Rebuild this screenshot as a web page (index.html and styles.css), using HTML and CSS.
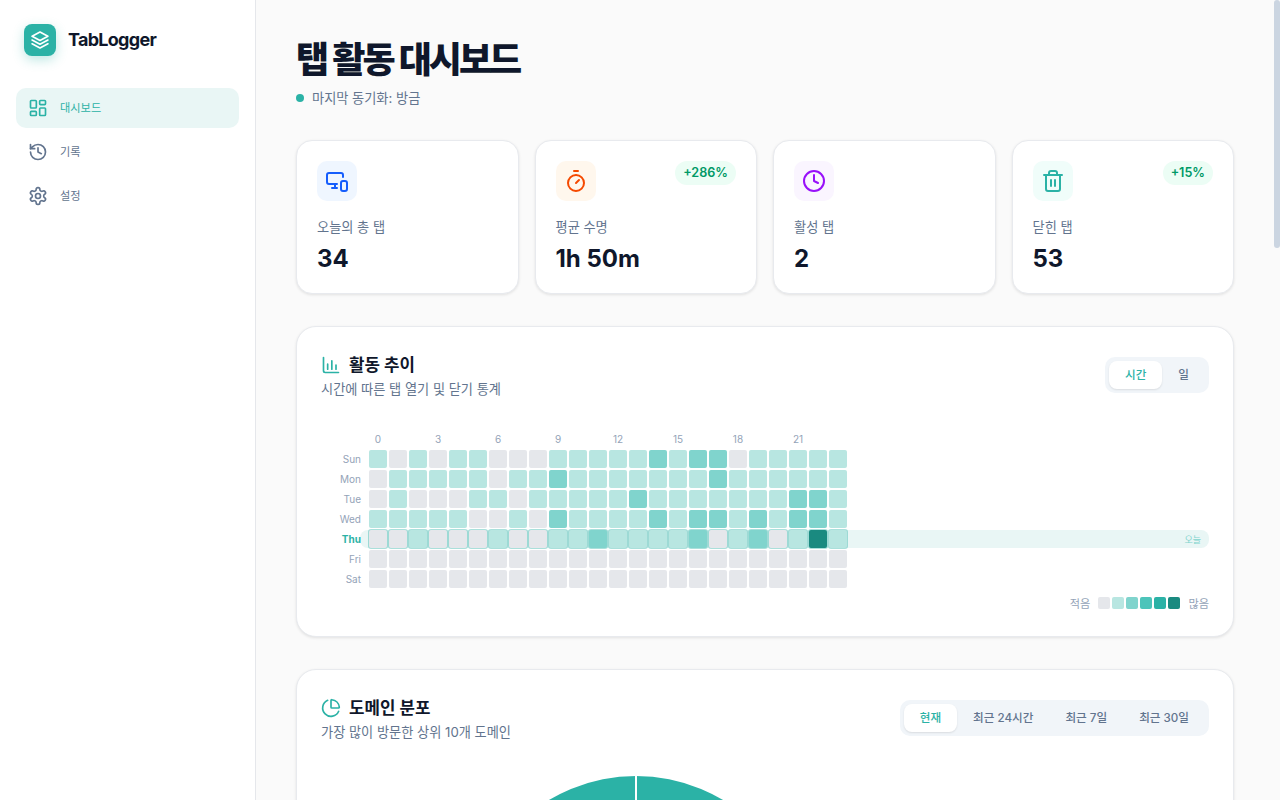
FILE: index.html
```html
<!DOCTYPE html>
<html lang="ko">
<head>
<meta charset="utf-8">
<title>TabLogger</title>
<link rel="stylesheet" href="styles.css">
</head>
<body>
<div class="app">
  <aside class="sidebar">
    <div class="brand">
      <div class="brand-logo">
        <svg viewBox="0 0 24 24" class="ic-20"><path d="M12 2.500 2.500 7.500 12 12.500l9.500-5z"/><path d="m2.500 12 9.500 5 9.500-5"/><path d="m2.500 16.500 9.500 5 9.500-5"/></svg>
      </div>
      <span class="brand-name">TabLogger</span>
    </div>
    <nav class="nav">
      <a class="nav-item active">
        <svg viewBox="0 0 24 24" class="ic-nav"><rect x="3" y="3" width="7" height="9" rx="1"/><rect x="14" y="3" width="7" height="5" rx="1"/><rect x="14" y="12" width="7" height="9" rx="1"/><rect x="3" y="16" width="7" height="5" rx="1"/></svg>
        <span>대시보드</span>
      </a>
      <a class="nav-item">
        <svg viewBox="0 0 24 24" class="ic-nav"><path d="M3 12a9 9 0 1 0 9-9 9.75 9.75 0 0 0-6.74 2.74L3 8"/><path d="M3 3v5h5"/><path d="M12 7v5l4 2"/></svg>
        <span>기록</span>
      </a>
      <a class="nav-item">
        <svg viewBox="0 0 24 24" class="ic-nav"><path d="M12.22 2h-.44a2 2 0 0 0-2 2v.18a2 2 0 0 1-1 1.730l-.43.25a2 2 0 0 1-2 0l-.15-.08a2 2 0 0 0-2.730.73l-.22.38a2 2 0 0 0 .73 2.730l.15.1a2 2 0 0 1 1 1.720v.51a2 2 0 0 1-1 1.740l-.15.09a2 2 0 0 0-.73 2.730l.22.38a2 2 0 0 0 2.730.73l.15-.08a2 2 0 0 1 2 0l.43.25a2 2 0 0 1 1 1.730V20a2 2 0 0 0 2 2h.44a2 2 0 0 0 2-2v-.18a2 2 0 0 1 1-1.730l.43-.25a2 2 0 0 1 2 0l.15.08a2 2 0 0 0 2.730-.73l.22-.39a2 2 0 0 0-.73-2.730l-.15-.08a2 2 0 0 1-1-1.740v-.5a2 2 0 0 1 1-1.740l.15-.09a2 2 0 0 0 .73-2.730l-.22-.38a2 2 0 0 0-2.730-.73l-.15.08a2 2 0 0 1-2 0l-.43-.25a2 2 0 0 1-1-1.730V4a2 2 0 0 0-2-2z"/><circle cx="12" cy="12" r="3"/></svg>
        <span>설정</span>
      </a>
    </nav>
  </aside>

  <main class="main">
    <header class="page-head">
      <h1 class="page-title">탭 활동 대시보드</h1>
      <div class="sync"><span class="sync-dot"></span><span class="sync-text">마지막 동기화: 방금</span></div>
    </header>

    <section class="stats">
      <article class="stat">
        <div class="stat-top">
          <div class="stat-icon tone-blue"><svg viewBox="0 0 24 24"><path d="M18 8V6a2 2 0 0 0-2-2H4a2 2 0 0 0-2 2v7a2 2 0 0 0 2 2h8"/><path d="M10 19v-3.960"/><path d="M7 19h5"/><rect x="16" y="12" width="6" height="10" rx="2"/></svg></div>
        </div>
        <div class="stat-label">오늘의 총 탭</div>
        <div class="stat-value">34</div>
      </article>
      <article class="stat">
        <div class="stat-top">
          <div class="stat-icon tone-orange"><svg viewBox="0 0 24 24"><path d="M10 2h4"/><path d="m12 14 3-3"/><circle cx="12" cy="14" r="8"/></svg></div>
          <span class="badge">+286%</span>
        </div>
        <div class="stat-label">평균 수명</div>
        <div class="stat-value">1h 50m</div>
      </article>
      <article class="stat">
        <div class="stat-top">
          <div class="stat-icon tone-purple"><svg viewBox="0 0 24 24"><circle cx="12" cy="12" r="10"/><path d="M12 6v6l4 2"/></svg></div>
        </div>
        <div class="stat-label">활성 탭</div>
        <div class="stat-value">2</div>
      </article>
      <article class="stat">
        <div class="stat-top">
          <div class="stat-icon tone-teal"><svg viewBox="0 0 24 24"><path d="M3 6h18"/><path d="M19 6v14c0 1-1 2-2 2H7c-1 0-2-1-2-2V6"/><path d="M8 6V4c0-1 1-2 2-2h4c1 0 2 1 2 2v2"/><path d="M10 11v6M14 11v6"/></svg></div>
          <span class="badge">+15%</span>
        </div>
        <div class="stat-label">닫힌 탭</div>
        <div class="stat-value">53</div>
      </article>
    </section>

    <section class="card">
      <div class="card-head">
        <div>
          <h2 class="card-title">
            <svg viewBox="0 0 24 24" class="ic-title"><path d="M3 3v16a2 2 0 0 0 2 2h16"/><path d="M8 17v-6M13 17V7M18 17v-5"/></svg>
            활동 추이
          </h2>
          <p class="card-sub">시간에 따른 탭 열기 및 닫기 통계</p>
        </div>
        <div class="seg">
          <button class="seg-btn on">시간</button>
          <button class="seg-btn">일</button>
        </div>
      </div>

      <div class="heatmap">
        <div class="hours" id="hours"></div>
        <div class="rows" id="rows"></div>
        <div class="legend">
          <span>적음</span>
          <div class="legend-cells">
            <i class="cell l0"></i><i class="cell l1"></i><i class="cell l2"></i><i class="cell l3"></i><i class="cell l4"></i><i class="cell l5"></i>
          </div>
          <span>많음</span>
        </div>
      </div>
    </section>

    <section class="card card-domain">
      <div class="card-head">
        <div>
          <h2 class="card-title">
            <svg viewBox="0 0 24 24" class="ic-title"><path d="M21 12c.55 0 1-.45.95-1A10 10 0 0 0 13 2.050c-.55-.05-1 .4-1 .95v8a1 1 0 0 0 1 1z"/><path d="M21.200 15.900A10 10 0 1 1 8 2.800"/></svg>
            도메인 분포
          </h2>
          <p class="card-sub">가장 많이 방문한 상위 10개 도메인</p>
        </div>
        <div class="seg">
          <button class="seg-btn on">현재</button>
          <button class="seg-btn">최근 24시간</button>
          <button class="seg-btn">최근 7일</button>
          <button class="seg-btn">최근 30일</button>
        </div>
      </div>
      <div class="pie-wrap">
        <svg class="pie" viewBox="0 0 340 340"><circle cx="170" cy="170" r="170"/><path d="M170 0v170"/></svg>
      </div>
    </section>
  </main>
  <div class="scroll-thumb"></div>
</div>
<script src="app.js"></script>
</body>
</html>
```

FILE: styles.css
```css
* { box-sizing: border-box; }
html, body { margin: 0; height: 100%; overflow: hidden; }
body {
  font-family: Inter, "Noto Sans CJK KR", sans-serif;
  color: #0f172b;
  background: #fafafa;
}
svg { fill: none; stroke: currentColor; stroke-width: 2; stroke-linecap: round; stroke-linejoin: round; flex: none; display: block; }
.ic-20 { width: 20px; height: 20px; }
.ic-nav { width: 20px; height: 20px; }
.ic-title { width: 20px; height: 20px; color: #2bb2a6; }

.app { display: flex; height: 100vh; position: relative; }
.scroll-thumb { position: absolute; top: 0; right: 0; width: 6px; height: 248px; border-radius: 3px; background: #cbd5e1; }

.sidebar {
  width: 256px; flex: none; background: #fff; border-right: 1px solid #e5e7eb;
  padding: 24px 16px;
}
.brand { display: flex; align-items: center; gap: 12px; padding: 0 8px; margin-bottom: 32px; height: 32px; }
.brand-logo {
  width: 32px; height: 32px; border-radius: 8px; background: #2bb2a6; color: #fff;
  display: flex; align-items: center; justify-content: center;
  box-shadow: 0 4px 12px rgba(43,178,166,.3);
}
.brand-name { font-size: 18px; line-height: 28px; margin-top: -1px; font-weight: 700; letter-spacing: -.04em; color: #0f172b; }
.nav { display: flex; flex-direction: column; gap: 4px; }
.nav-item {
  height: 40px; display: flex; align-items: center; gap: 12px; padding: 0 12px;
  border-radius: 10px; font-size: 11.2px; color: #62748e;
}
.nav-item span { margin-top: -2px; }
.nav-item svg { color: #62748e; }
.nav-item.active { background: #e9f6f5; color: #2bb2a6; }
.nav-item.active svg { color: #2bb2a6; }

.main { flex: 1; min-width: 0; height: 100vh; overflow: hidden; padding: 40px 46px 40px 40px; }

.page-head { margin-bottom: 32px; }
.page-title { margin: 0; font-size: 36px; line-height: 40px; font-weight: 900; letter-spacing: -3px; word-spacing: 2px; color: #0f172b; }
.sync { display: flex; align-items: center; gap: 8px; height: 20px; margin-top: 8px; font-size: 13.2px; line-height: 20px; color: #62748e; }
.sync-text { margin-top: 0; }
.sync-dot { width: 8px; height: 8px; border-radius: 50%; background: #2bb2a6; }

.stats { display: grid; grid-template-columns: repeat(4, 1fr); gap: 16px; margin-bottom: 32px; }
.stat {
  height: 154px; padding: 20px; background: #fff; border: 1px solid #e8eaee; border-radius: 16px;
  box-shadow: 0 1px 3px rgba(0,0,0,.1);
}
.stat-top { display: flex; justify-content: space-between; align-items: flex-start; margin-bottom: 16px; }
.stat-icon { width: 40px; height: 40px; border-radius: 10px; display: flex; align-items: center; justify-content: center; }
.stat-icon svg { width: 24px; height: 24px; }
.tone-blue { background: #eff6ff; color: #155dfc; }
.tone-orange { background: #fff7ed; color: #f54900; }
.tone-purple { background: #faf5ff; color: #9810fa; }
.tone-teal { background: #f0fdfa; color: #2bb2a6; }
.badge { font-size: 12.6px; font-weight: 600; line-height: 16px; padding: 4px 8px; border-radius: 999px; background: #ecfdf5; color: #009966; }
.stat-label { font-size: 13.2px; line-height: 20px; color: #62748e; }
.stat-value { font-size: 24px; line-height: 32px; font-weight: 700; margin-top: 6px; color: #0f172b; }

.card {
  background: #fff; border: 1px solid #e8eaee; border-radius: 20px; padding: 26px 24px;
  box-shadow: 0 1px 3px rgba(0,0,0,.1); margin-bottom: 32px;
}
.card-domain { height: 1700px; }
.card-head { display: flex; justify-content: space-between; align-items: flex-start; }
.card-title { margin: 0; display: flex; align-items: center; gap: 8px; font-size: 16.8px; line-height: 24px; font-weight: 600; color: #0f172b; }
.card-sub { margin: 2px 0 0; font-size: 13.2px; line-height: 20px; color: #62748e; }
.seg { display: flex; margin-top: 4px; padding: 4px; border-radius: 10px; background: #f1f5f9; }
.seg-btn {
  font: 500 11.6px/20px Inter, "Noto Sans CJK KR", sans-serif; height: 28px; padding: 0 16px; border: 0; border-radius: 8px;
  background: transparent; color: #62748e;
}
.seg-btn.on { background: #fff; color: #2bb2a6; box-shadow: 0 1px 2px rgba(0,0,0,.1); }

.heatmap { margin-top: 33px; }
.hours { display: grid; grid-template-columns: repeat(24, 18px); column-gap: 2px; margin-left: 48px; height: 14px; margin-bottom: 4px; font-size: 10px; line-height: 14px; color: #94a3b8; }
.hour { white-space: nowrap; text-align: center; }
.rows { display: flex; flex-direction: column; gap: 2px; }
.row { display: flex; align-items: center; position: relative; height: 18px; }
.row-label { width: 40px; margin-right: 8px; text-align: right; font-size: 10px; color: #94a3b8; }
.row-cells { display: grid; grid-template-columns: repeat(24, 18px); column-gap: 2px; position: relative; }
.cell { display: block; width: 18px; height: 18px; border-radius: 2px; }
.l0 { background: #e5e7eb; }
.l1 { background: #b8e6e1; }
.l2 { background: #80d4cd; }
.l3 { background: #4cc4ba; }
.l4 { background: #2bb2a6; }
.l5 { background: #1a8a80; }
.row.today::before { content: ""; position: absolute; left: 39px; right: 0; top: 0; bottom: 0; border-radius: 8px; background: #e9f6f5; }
.row.today .row-label { color: #2bb2a6; font-weight: 700; position: relative; }
.row.today .cell { box-shadow: 0 0 0 1px rgba(43,178,166,.4); }
.today-tag { position: absolute; right: 8px; top: 50%; transform: translateY(-50%); font-size: 9px; color: #80d4cd; }
.legend { display: flex; justify-content: flex-end; align-items: center; gap: 8px; margin-top: 8px; height: 14px; font-size: 11.2px; color: #94a3b8; }
.legend-cells { display: flex; gap: 2px; }
.legend .cell { width: 12px; height: 12px; }

.pie-wrap { display: flex; margin-top: 34px; padding-left: 145px; }
.pie { width: 340px; height: 340px; }
.pie circle { fill: #2bb2a6; stroke: none; }
.pie path { stroke: #fff; stroke-width: 2; stroke-linecap: butt; }
```

FILE: app.js
```js
var hoursEl = document.getElementById('hours');
for (var h = 0; h < 24; h++) {
  var s = document.createElement('span');
  s.className = 'hour';
  s.textContent = h % 3 === 0 ? String(h) : '';
  hoursEl.appendChild(s);
}
var data = [
  ['Sun', '101011000111112122011111'],
  ['Mon', '011111011211111112111111'],
  ['Tue', '010001101111121111111221'],
  ['Wed', '111110010211112122121221'],
  ['Thu', '001000100112111120120151'],
  ['Fri', '000000000000000000000000'],
  ['Sat', '000000000000000000000000']
];
var rowsEl = document.getElementById('rows');
data.forEach(function (d, i) {
  var row = document.createElement('div');
  row.className = 'row' + (i === 4 ? ' today' : '');
  var label = document.createElement('span');
  label.className = 'row-label';
  label.textContent = d[0];
  row.appendChild(label);
  var cells = document.createElement('div');
  cells.className = 'row-cells';
  d[1].split('').forEach(function (v) {
    var c = document.createElement('i');
    c.className = 'cell l' + v;
    cells.appendChild(c);
  });
  row.appendChild(cells);
  if (i === 4) {
    var tag = document.createElement('span');
    tag.className = 'today-tag';
    tag.textContent = '오늘';
    row.appendChild(tag);
  }
  rowsEl.appendChild(row);
});
```
